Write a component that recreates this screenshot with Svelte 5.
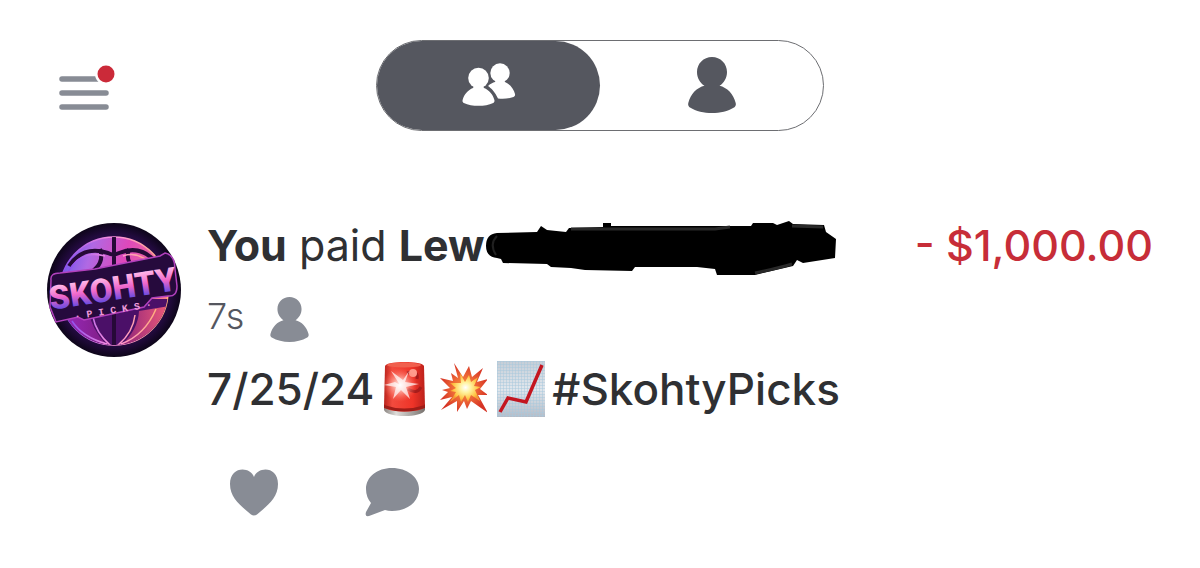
<script lang="ts">
  let audience = $state<'friends' | 'me'>('friends')
  let liked = $state(false)

  const payment = {
    actor: 'You',
    recipient: 'Lew',
    age: '7s',
    amount: '- $1,000.00',
    date: '7/25/24',
    tag: '#SkohtyPicks'
  }
</script>

{#snippet person()}
  <svg class="person" viewBox="0 0 48 56" aria-hidden="true">
    <path
      fill="currentColor"
      d="M24 0C32.500 0 39 6.700 39 15C39 21 36 26 31.500 28.800C39 30.500 45.500 37 47.700 46C48.200 48 47.500 49.500 46 50.500C40 54.300 32 56 24 56C16 56 8 54.300 2 50.500C.5 49.500-.2 48 .3 46C2.500 37 9 30.500 16.500 28.800C12 26 9 21 9 15C9 6.700 15.500 0 24 0Z"
    />
  </svg>
{/snippet}

<div class="screen">
  <header class="top-bar">
    <button class="menu" aria-label="Menu">
      <svg width="58" height="46" viewBox="0 0 58 46" aria-hidden="true">
        <g stroke="#888c95" stroke-width="5.500" stroke-linecap="round">
          <path d="M4 14H46M4 28H48M4 42H48" />
        </g>
        <circle cx="48" cy="9" r="11" fill="#fff" />
        <circle cx="48" cy="9" r="8.500" fill="#cb2a39" />
      </svg>
    </button>

    <div class="toggle" role="group" aria-label="Feed">
      <button
        class:active={audience === 'friends'}
        aria-label="Friends"
        aria-pressed={audience === 'friends'}
        onclick={() => (audience = 'friends')}
      >
        <svg class="friends" width="54" height="44" viewBox="0 0 54 44" aria-hidden="true">
          <g fill="currentColor">
            <circle cx="38" cy="10" r="9.700" />
            <path d="M34 17H42L43 19C48 21 52 26 53 31C53.300 32.500 52.800 33.500 51.500 34C46 36 40 36 36 35.500C33 29 29 25 26 23C28 21 31 19.500 33 19Z" />
          </g>
          <circle cx="16.500" cy="15" r="12" fill="#55575f" />
          <circle cx="16.500" cy="15" r="10.300" fill="currentColor" />
          <path
            fill="currentColor"
            d="M12 23H21L22 25C27 27 31 31.500 32.400 37C32.700 38.500 32.300 39.300 31.200 40C23 43.800 10 43.800 1.800 40C.7 39.300.3 38.500.6 37C2 31.500 6 27 11 25Z"
          />
        </svg>
      </button>
      <button
        class:active={audience === 'me'}
        aria-label="Only me"
        aria-pressed={audience === 'me'}
        onclick={() => (audience = 'me')}
      >
        {@render person()}
      </button>
    </div>
  </header>

  <article class="payment">
    <svg class="avatar" width="134" height="134" viewBox="0 0 134 134" role="img" aria-label="Skohty Picks">
      <defs>
        <radialGradient id="night">
          <stop offset="0.600" stop-color="#34105e" />
          <stop offset="0.850" stop-color="#210a3c" />
          <stop offset="1" stop-color="#0d0519" />
        </radialGradient>
        <linearGradient id="ball" x1="0" y1="0" x2="1" y2="0.300">
          <stop offset="0" stop-color="#5b51ed" />
          <stop offset="0.300" stop-color="#b069e4" />
          <stop offset="0.600" stop-color="#df48ba" />
          <stop offset="1" stop-color="#f47b8e" />
        </linearGradient>
        <linearGradient id="lower" x1="0" y1="0" x2="1" y2="0">
          <stop offset="0" stop-color="#9a2cc4" />
          <stop offset="0.500" stop-color="#7d1a7a" />
          <stop offset="1" stop-color="#f15c79" />
        </linearGradient>
        <linearGradient id="letters" x1="0" y1="0" x2="0" y2="1">
          <stop offset="0.200" stop-color="#ffb6e8" />
          <stop offset="0.500" stop-color="#ef66ca" />
          <stop offset="0.800" stop-color="#6a4be0" />
        </linearGradient>
        <linearGradient id="rim" x1="0" y1="0" x2="1" y2="0">
          <stop offset="0" stop-color="#874cef" />
          <stop offset="0.500" stop-color="#ff92df" />
          <stop offset="1" stop-color="#ffaf79" />
        </linearGradient>
        <clipPath id="ball-clip"><circle cx="67" cy="68" r="54" /></clipPath>
      </defs>
      <circle cx="67" cy="67" r="67" fill="url(#night)" />
      <circle cx="67" cy="68" r="54" fill="url(#ball)" stroke="url(#rim)" stroke-width="1.500" />
      <g clip-path="url(#ball-clip)">
        <path d="M0 76H134V134H0Z" fill="#4b1068" />
        <path d="M10 88Q28 119 62 124Q44 107 42 88ZM72 124Q105 118 123 83L92 88Q91 108 72 124Z" fill="url(#lower)" />
        <g fill="none" stroke="#260937" stroke-width="4">
          <path d="M67 13V125M22 43Q36 22 61 30Q66 33 72 30Q97 20 113 45" />
          <path d="M36 53Q59 44 53 26M98 50Q76 43 82 26" />
        </g>
        <path
          d="M21 49Q34 26 58 33M76 33Q94 27 110 47M46 94Q49 110 64 123M88 92Q86 110 70 123M109 86Q98 112 74 121M25 98Q35 114 60 121"
          fill="none" stroke="url(#rim)" stroke-width="1.500"
        />
      </g>
      <path
        d="M4 57Q3 50 13 50L48 46L113 33L118 30Q128 32 128 46L130 63Q130 74 121 73L105 75L97 84L37 97L31 94L9 99L3 84Z"
        fill="#260a3d" stroke="#b241bd" stroke-width="1.500"
      />
      <g transform="rotate(-9 67 67)">
        <text x="66" y="77" class="logo-name" text-anchor="middle" fill="url(#letters)">SKOHTY</text>
        <text x="63" y="90" class="logo-sub" text-anchor="middle" fill="#ee9ada">· P I C K S ·</text>
      </g>
    </svg>

    <div class="details">
      <div class="heading">
        <h2><strong>{payment.actor}</strong> paid <strong>{payment.recipient}</strong></h2>
        <svg class="redaction" width="352" height="56" viewBox="0 0 352 56" role="img" aria-label="Name hidden">
          <path
            d="M16 42L18 46L62 47L66 50L86 51L100 53L147 54L150 50H212L230 52L232 58L270 58L308 49L312 43L318 46L350 41L351 22L341 15L339 8L308 7L304 4L292 8L288 6H268L266 9H126V6H118V10L84 11L81 15L62 13L56 9L52 15L12 16Q1 17 1 29Q1 40 12 41Z"
            fill="#000"
          />
          <path d="M86 12H230L245 10M270 56Q294 51 307 47M307 9L338 10" fill="none" stroke="#292929" stroke-width="3" />
          <path d="M12 19Q4 27 11 38" fill="none" stroke="#202020" stroke-width="2" />
        </svg>
        <span class="amount">{payment.amount}</span>
      </div>

      <div class="meta">
        <span>{payment.age}</span>
        {@render person()}
      </div>

      <p class="note">
        <span>{payment.date}</span>
        <span class="emojis">
          <svg width="48" height="56" viewBox="0 0 48 56" role="img" aria-label="Police light">
            <defs>
              <linearGradient id="dome">
                <stop offset="0" stop-color="#b9231c" />
                <stop offset="0.200" stop-color="#f24b3e" />
                <stop offset="0.700" stop-color="#ee3428" />
                <stop offset="1" stop-color="#bb211b" />
              </linearGradient>
              <radialGradient id="glow">
                <stop offset="0" stop-color="#fff" />
                <stop offset="0.300" stop-color="#ffc5bb" stop-opacity="0.900" />
                <stop offset="1" stop-color="#ff6858" stop-opacity="0" />
              </radialGradient>
              <linearGradient id="base">
                <stop offset="0" stop-color="#8b8581" />
                <stop offset="0.300" stop-color="#deddda" />
                <stop offset="1" stop-color="#77716d" />
              </linearGradient>
            </defs>
            <path d="M3 43H44V49C41 57 6 57 3 49Z" fill="url(#base)" />
            <path d="M4 5C5-.5 42-.5 43 5L44 46C40 52 7 52 3 46Z" fill="url(#dome)" />
            <path d="M3 44Q23 51 44 44V47Q23 54 3 47Z" fill="#9e1d18" />
            <ellipse cx="23" cy="4" rx="17" ry="2.500" fill="#f0604e" />
            <path d="M26 12Q38 9 36 18M27 28Q36 34 40 26" stroke="#a71c1b" stroke-width="3" fill="none" />
            <circle cx="32" cy="12" r="4" fill="#ff9b8c" />
            <circle cx="19" cy="24" r="17" fill="url(#glow)" />
            <path d="M19 24L10 10L22 19L28 10L24 21L38 23L25 26L29 38L20 29L12 38L15 26L3 24L14 21Z" fill="#fff" opacity="0.700" />
          </svg>
          <svg width="48" height="56" viewBox="0 0 48 56" role="img" aria-label="Collision">
            <defs>
              <radialGradient id="flame">
                <stop offset="0" stop-color="#f7a035" />
                <stop offset="0.500" stop-color="#ed6737" />
                <stop offset="1" stop-color="#d63425" />
              </radialGradient>
              <radialGradient id="spark">
                <stop offset="0" stop-color="#fff" />
                <stop offset="0.350" stop-color="#fff3a0" />
                <stop offset="0.800" stop-color="#ffc443" />
                <stop offset="1" stop-color="#f29733" />
              </radialGradient>
            </defs>
            <path d="M15 2L24 16L30 5L33 16L44 7L38 21L49 18L41 28L49 34L39 34L49 52L32 40L28 48L25 40L18 51L18 40L2 49L13 36L1 39L9 31L3 29L11 27L1 17L14 20L12 12L19 17Z" fill="url(#flame)" />
            <path d="M21 12L26 21L30 14L32 21L39 16L35 25L42 26L36 29L41 40L32 34L29 41L26 34L22 41L20 34L11 41L17 31L11 30L17 27L11 22L22 22Z" fill="url(#spark)" />
          </svg>
          <svg width="48" height="56" viewBox="0 0 48 56" role="img" aria-label="Chart increasing">
            <defs>
              <linearGradient id="paper" x1="0" y1="0" x2="0" y2="1">
                <stop offset="0" stop-color="#c5cdd6" />
                <stop offset="0.500" stop-color="#e1e7ed" />
                <stop offset="1" stop-color="#b5bcc7" />
              </linearGradient>
              <pattern id="grid" width="3" height="3" patternUnits="userSpaceOnUse">
                <path d="M0 .5H3M.5 0V3" stroke="#a9c9dc" stroke-width="0.500" />
              </pattern>
            </defs>
            <path d="M0 0H48V56H0Z" fill="url(#paper)" />
            <path d="M0 0H48V56H0Z" fill="url(#grid)" />
            <path d="M3 51L11 37L29 41L45 4" fill="none" stroke="#c31620" stroke-width="3.500" />
          </svg>
        </span>
        <span>{payment.tag}</span>
      </p>

      <div class="actions">
        <button aria-label="Like" aria-pressed={liked} onclick={() => (liked = !liked)}>
          <svg width="50" height="48" viewBox="0 0 50 48" aria-hidden="true">
            <path fill="currentColor" d="M25 9C21-2 1-2 1 16C1 30 12 38 22 46.500Q25 48.500 28 46.500C38 38 49 30 49 16C49-2 29-2 25 9Z" />
          </svg>
        </button>
        <button aria-label="Comment">
          <svg width="54" height="50" viewBox="0 0 54 50" aria-hidden="true">
            <path fill="currentColor" d="M27 1C42 1 54 10 54 22C54 35 42 44 27 44Q23 44 20 43L4 49Q-.5 50 1 45L6 36Q1 30 1 22C1 10 12 1 27 1Z" />
          </svg>
        </button>
      </div>
    </div>
  </article>
</div>

<style>
  :global(body) {
    margin: 0;
    background: #fff;
  }

  .screen {
    padding: 40px 47px 48px;
    font-family: Inter, 'Liberation Sans', sans-serif;
    color: #2f3033;
  }

  button {
    display: flex;
    align-items: center;
    justify-content: center;
    padding: 0;
    border: none;
    background: none;
    color: inherit;
    cursor: pointer;
  }

  svg {
    display: block;
    flex-shrink: 0;
  }

  .top-bar {
    display: grid;
    grid-template-columns: 1fr 448px 1fr;
    align-items: center;
  }

  .menu {
    justify-self: start;
    margin: 4px 0 0 11px;
  }

  .toggle {
    display: grid;
    grid-template-columns: 1fr 1fr;
    box-sizing: border-box;
    height: 91px;
    border: 1px solid #6d6e72;
    border-radius: 46px;
    color: #55575f;
  }

  .toggle button {
    padding-bottom: 2px;
    border-radius: 46px;
  }

  .toggle .active {
    background: #55575f;
    color: #fff;
  }

  .toggle .person {
    width: 48px;
    height: 56px;
  }

  .payment {
    display: flex;
    align-items: flex-start;
    gap: 26px;
    margin-top: 92px;
  }

  .logo-name {
    font-family: Roboto, sans-serif;
    font-size: 33px;
    font-weight: 900;
  }

  .logo-sub {
    font-family: 'Liberation Mono', monospace;
    font-size: 10px;
    font-weight: 700;
  }

  .details {
    flex: 1;
    min-width: 0;
  }

  .heading {
    display: flex;
    align-items: center;
    height: 44px;
  }

  h2,
  .amount,
  .note {
    margin: 0;
    font-size: 43px;
    line-height: 48px;
    white-space: nowrap;
  }

  h2 {
    font-weight: 400;
  }

  h2 strong {
    font-weight: 700;
  }

  .redaction {
    overflow: visible;
  }

  .amount {
    margin-left: auto;
    font-weight: 500;
    color: #c72d38;
  }

  .meta {
    display: flex;
    align-items: center;
    gap: 26px;
    height: 45px;
    margin-top: 30px;
    font-size: 36px;
    font-weight: 300;
    color: #55575f;
  }

  .meta span {
    padding-bottom: 8px;
  }

  .meta .person {
    width: 39px;
    height: 45px;
    color: #888c95;
  }

  .note {
    display: flex;
    align-items: center;
    gap: 7px;
    margin-top: 19px;
    font-size: 44px;
    font-weight: 500;
  }

  .emojis {
    display: flex;
    gap: 10px;
  }

  .actions {
    display: flex;
    align-items: center;
    gap: 86px;
    margin: 50px 0 0 22px;
    color: #888c95;
  }
</style>
